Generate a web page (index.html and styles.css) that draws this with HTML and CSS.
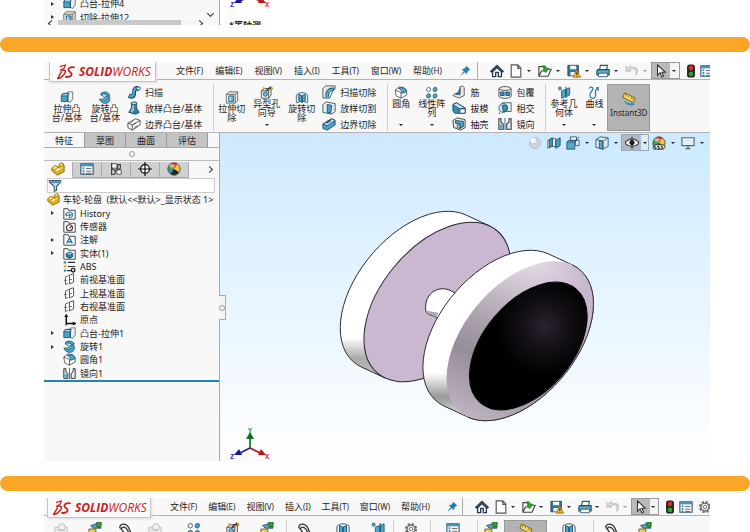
FILE: index.html
```html
<!DOCTYPE html>
<html lang="zh-CN">
<head>
<meta charset="utf-8">
<meta name="viewport" content="width=device-width, initial-scale=1">
<title>SOLIDWORKS</title>
<link rel="stylesheet" href="styles.css">
</head>
<body>
<svg class="defs" aria-hidden="true">
  <linearGradient id="rimShade" x1="0" y1="0" x2="0" y2="1">
    <stop offset="0" stop-color="#fff"/><stop offset=".76" stop-color="#fff"/><stop offset=".88" stop-color="#aaa"/><stop offset="1" stop-color="#c4c4c4"/>
  </linearGradient>
  <linearGradient id="rimFront" x1="0" y1="0" x2="0" y2="1">
    <stop offset="0" stop-color="#fff"/><stop offset=".72" stop-color="#fff"/><stop offset=".86" stop-color="#999"/><stop offset="1" stop-color="#eee"/>
  </linearGradient>
  <linearGradient id="chamfer" gradientUnits="userSpaceOnUse" x1="600" y1="180" x2="400" y2="640">
    <stop offset="0" stop-color="#eee7ef"/><stop offset=".12" stop-color="#d6ccd9"/><stop offset=".45" stop-color="#a9a0ac"/><stop offset=".65" stop-color="#958d98"/><stop offset="1" stop-color="#bdb2c1"/>
  </linearGradient>
  <linearGradient id="chamferRight" gradientUnits="userSpaceOnUse" x1="560" y1="420" x2="780" y2="420">
    <stop offset="0" stop-color="#c6b5cc" stop-opacity="0"/><stop offset="1" stop-color="#c6b5cc"/>
  </linearGradient>
  <radialGradient id="dome" gradientUnits="userSpaceOnUse" cx="78" cy="0" r="150">
    <stop offset="0" stop-color="#2b222e"/><stop offset=".45" stop-color="#141016"/><stop offset="1" stop-color="#000"/>
  </radialGradient>
  <symbol id="ds" viewBox="0 0 20 17"><g fill="none" stroke="#c9211e" stroke-linecap="round" stroke-linejoin="round"><path stroke-width="1.2" d="M4 2.5 9.5 1 8 4.5 4 7"/><path stroke-width="1.6" d="M5 6.5C10 6 10.500 8 8 11 6 13.500 3 15.500 1 15.500 2.500 13 4 10.500 5 8.500"/><path stroke-width="1.900" d="M18.500 3.500C15 3 12.500 4 12.500 6S16 9 16 11 13 14 10 13.800"/></g></symbol>
  <symbol id="pin" viewBox="0 0 16 16"><path fill="#2280b5" d="m9 1 6 6-2 .7-2.300 2.300-.7 3.500-3-3L1.500 15 1 14.500 5.500 9l-3-3L6 5.300 8.500 3z"/></symbol>
  <symbol id="home" viewBox="0 0 16 16"><path fill="#fff" stroke="#26384a" stroke-width="1.500" d="M3 7v7.500h3.500v-5h3v5H13V7"/><path fill="#9ec3d6" stroke="#26384a" stroke-width="1.500" d="M1 8.300 8 1.500l7 6.800-1.300 1L8 4 2.300 9.300z"/></symbol>
  <symbol id="new" viewBox="0 0 16 16"><path fill="#fff" stroke="#555" stroke-width="1.300" d="M2.500 1H10l3.500 3.500V15h-11zM10 1v4h3.500"/></symbol>
  <symbol id="open" viewBox="0 0 16 16"><path fill="#fff" stroke="#444" stroke-width="1.300" d="M1 3v11h10.500L15 6H8L6.500 3zM1 14l3-6h4"/><path fill="#3aa62d" stroke="#187a18" d="M4 3c3-2 5-1 6 2l2-.3-3 5-3.500-4 2-.2C7 4 6 3 4 3z"/></symbol>
  <symbol id="save" viewBox="0 0 16 16"><path fill="#3a7695" stroke="#21465c" d="M1 1.500h12v12H1z"/><path fill="#e7f4fa" d="M3.500 2h7v4h-7zM4 9h5v4H4z"/><path fill="#ffc52e" stroke="#ad6500" d="m11 7 4.500 8H7z"/><path stroke="#442900" stroke-width="1.300" d="M11.200 9.500v3m0 .8v1"/></symbol>
  <symbol id="print" viewBox="0 0 16 16"><path fill="#fff" stroke="#285b75" stroke-width="1.300" d="M4 7 5 1.500h8L12 7"/><path fill="#62a7c7" stroke="#244e65" stroke-width="1.300" d="M2 6.500h13v6H1V8z"/><path fill="#fff" stroke="#285b75" d="M3 10.500h10v4H3z"/></symbol>
  <symbol id="undo" viewBox="0 0 16 16"><path fill="none" stroke="#c5c9cc" stroke-width="1.500" d="M6 2 2 5l4 3V6c6-2 8 1 6 7 4-5 3-10-6-9zM1 2v6h5"/></symbol>
  <symbol id="cursor" viewBox="0 0 16 16"><path fill="#fff" stroke="#333" stroke-width="1.200" d="M4 1v12l3-3 2 5 2-1-2-4.500h4z"/></symbol>
  <symbol id="light" viewBox="0 0 16 16"><rect x="3.500" y=".5" width="9" height="15" rx="3" fill="#222"/><circle cx="8" cy="4.500" r="2.800" fill="#e52620"/><circle cx="8" cy="11.300" r="2.800" fill="#20a829"/></symbol>
  <symbol id="sheet" viewBox="0 0 16 16"><path fill="#fff" stroke="#34576a" stroke-width="1.300" d="M1 2h14v12H1z"/><path fill="#4893b8" d="M1 2h14v3H1z"/><path stroke="#3186b4" stroke-width="2" d="M3 7h2m-2 3h2m-2 3h2"/><path stroke="#555" d="M7 7.500h6m-6 3h6m-6 2.500h6"/></symbol>
  <symbol id="gear" viewBox="0 0 16 16"><circle cx="8" cy="8" r="5.500" fill="none" stroke="#777" stroke-width="3" stroke-dasharray="2.500 1.820"/><circle cx="8" cy="8" r="4.500" fill="#f5f5f5" stroke="#666" stroke-width="1.400"/><circle cx="8" cy="8" r="2" fill="none" stroke="#666"/></symbol>
  <symbol id="extrude" viewBox="0 0 16 16"><path fill="#eee" stroke="#56636b" d="m7 3 3-2h5v9l-3 4-5-2z"/><path fill="#4aa4cb" stroke="#1b4c66" d="m1 6 2-3h7l-1 3v7H1z"/><path fill="#a6daef" stroke="#1b4c66" d="M1 6h8l1-3H3z"/><path fill="none" stroke="#1b4c66" d="M9 6v7"/></symbol>
  <symbol id="revolve" viewBox="0 0 16 16"><path fill="#4aa4cb" stroke="#1b5875" d="M3 3c4-3 9-2 11 2l-5 2L3 5zM1 10c3 0 9-.5 12-4 2 4 1 8-3 9-4 .8-7-1-9-5z"/><path fill="#b1e0f1" stroke="#1b5875" d="M3 4c4-1 7 0 8 2L7 8zM2 11c4 1 8 0 11-3"/></symbol>
  <symbol id="sweep" viewBox="0 0 16 16"><path fill="none" stroke="#174a63" stroke-width="5" d="M2 12c6 3 6-1 6-4s2-6 6-3"/><path fill="none" stroke="#4aa4cb" stroke-width="3" d="M2.500 12.200c5 2 5-1 5-4s3-6 6-3.500"/><circle cx="13" cy="4" r="2" fill="#d7eef6" stroke="#174a63"/></symbol>
  <symbol id="loft" viewBox="0 0 16 16"><path fill="#397fa2" stroke="#1b4c66" d="M5 2h6v6l3 5-4 2-8-2 3-5z"/><path fill="#8fcbe4" d="M6 4h2v6l-2 3-2-1 2-4z"/><ellipse cx="8" cy="2.500" rx="3" ry="1.500" fill="#c9eaf5" stroke="#1b4c66"/></symbol>
  <symbol id="boundary" viewBox="0 0 16 16"><path fill="#fff" stroke="#444" d="m1 7 9-5 5 2v5l-9 6-5-3zM1 7l5 2 9-5M6 9v6"/><path fill="none" stroke="#666" d="m4 7 3-3m1 5 3-3m-3 6 4-2"/></symbol>
  <symbol id="cut" viewBox="0 0 16 16"><path fill="#eee" stroke="#555" d="m1 4 3-3h11v11l-3 3H1zM1 4h11v11m0-11 3-3"/><path fill="#60afd0" stroke="#1b5875" d="M4 6h6v7H4z"/><path fill="#b6dfef" d="M5 7h2v5H5z"/></symbol>
  <symbol id="hole" viewBox="0 0 16 16"><path fill="#eee" stroke="#444" d="m1 6 4-3h8v8l-3 4H1zM1 6h9v9m0-9 3-3"/><circle cx="6" cy="10" r="2.600" fill="#70b7d4" stroke="#1b5875"/><path stroke="#333" stroke-width="2" d="m7 6 6-5"/><path stroke="#e8951a" stroke-width="2" d="m10 4 2 1m1-4 2 3M3 2l2 1"/></symbol>
  <symbol id="revcut" viewBox="0 0 16 16"><path fill="#e9eef0" stroke="#33505e" d="M1 5c3-4 11-4 14 0v9h-3l-2-3H6l-2 3H1z"/><path fill="#54a8cb" stroke="#194c66" d="m4 4 4 2v8l-4-2zM12 4 8 6v8l4-2z"/></symbol>
  <symbol id="sweepcut" viewBox="0 0 16 16"><path fill="#e7e9ea" stroke="#44535b" d="m1 4 3-3h11v3l-3 3-3 8H1z"/><path fill="none" stroke="#1b5875" stroke-width="4" d="M6 14c-1-6 2-10 8-9"/><path fill="none" stroke="#5bb1d4" stroke-width="2" d="M6 14c-1-6 2-9 7-9"/></symbol>
  <symbol id="loftcut" viewBox="0 0 16 16"><path fill="#e9eef0" stroke="#33505e" d="m1 4 4-3 10 2v9l-4 3-10-2z"/><path fill="#4ba4ca" stroke="#194c66" d="m6 4 5 1-1 9-4-1z"/></symbol>
  <symbol id="boundcut" viewBox="0 0 16 16"><path fill="#4ba4ca" stroke="#194c66" d="m1 8 10-6 4 2v5l-9 6-5-2z"/><path fill="#bce5f3" stroke="#194c66" d="m1 8 10-6 4 2-9 6z"/><path stroke="#222" stroke-width="1.200" d="m5 7 5-3"/></symbol>
  <symbol id="fillet" viewBox="0 0 16 16"><path fill="#fff" stroke="#444" d="M1 5 6 1l5 1c3 1 4 3 4 5v4l-7 4-6-3zM1 5l7 3v7"/><path fill="#4ca8ce" stroke="#1b5875" d="M5 3 8 2c4 0 6 2 7 5L9 9c0-3-1-5-4-6z"/></symbol>
  <symbol id="pattern" viewBox="0 0 16 16"><g fill="#fff" stroke="#345260" stroke-width="1"><path d="m1.500 3 2-1.500 2.500 1v3l-2 1.500-2.500-1z"/><path fill="#4ca8ce" d="m9.500 3 2-1.500 2.500 1v3l-2 1.500-2.500-1zM1.500 11l2-1.500 2.500 1v3L4 15l-2.500-1zM9.500 11l2-1.500 2.500 1v3L12 15l-2.500-1z"/></g></symbol>
  <symbol id="rib" viewBox="0 0 16 16"><path fill="#e5e8e9" stroke="#555" d="m9 2 3-1 2 2v9l-6 3-7-3 2-2 6 1z"/><path fill="#3b91b9" stroke="#194c66" d="m9 4v7l-5-1c3-1 4-3 5-6z"/></symbol>
  <symbol id="draft" viewBox="0 0 16 16"><path fill="#378db5" stroke="#194c66" d="m1 4 4-2 10 6v6H3l-2-3z"/><path fill="#c7e8f3" stroke="#194c66" d="m1 4 4-2 10 6-6 1z"/><path fill="#fff" stroke="#345" d="M9 9h6v5H9z"/></symbol>
  <symbol id="shell" viewBox="0 0 16 16"><path fill="#e6edf0" stroke="#333" d="m1 4 5-3 9 2v9l-5 3-8-3z"/><path fill="#4aa4cb" stroke="#194c66" d="m4 4 9 1v6l-4 2V8L4 7z"/><path fill="#fff" stroke="#333" d="M6 9h3v4l-3-1z"/></symbol>
  <symbol id="wrap" viewBox="0 0 16 16"><path fill="#eee" stroke="#444" d="M1 4v9c3 3 11 3 14 0V4c-3-3-11-3-14 0 3 3 11 3 14 0"/><path fill="#3997c1" stroke="#194c66" d="M3 8h4v4H3zm6 0h4v4H9z"/></symbol>
  <symbol id="intersect" viewBox="0 0 16 16"><path fill="#eee" stroke="#456" d="M5 2h10v10H5z"/><circle cx="6" cy="8" r="5" fill="#d1e8f1" stroke="#255b75"/><path fill="#3894bd" stroke="#194c66" d="M5 5h5c2 4 0 7-4 7zM2 13l-1 2"/></symbol>
  <symbol id="mirror" viewBox="0 0 16 16"><g fill="#e6eef2" stroke="#333" stroke-width="1.200"><path d="M1 2v12h5V8L3.500 6V2zM15 2v12h-5V8l2.500-2V2z"/><path stroke="#2a84ae" d="M8 1v14"/></g><path fill="#4aa4cb" d="m2 8 3 1v4H2z"/></symbol>
  <symbol id="ref" viewBox="0 0 16 16"><circle cx="3" cy="3" r="1.800" fill="#58add0" stroke="#235c76"/><path fill="#4da7cb" stroke="#235c76" d="m5 6 5-2v9l-5 2zm6-2 4-2v9l-4 2z"/><path stroke="#235c76" stroke-width="1.300" d="M10.500 1v14"/></symbol>
  <symbol id="curve" viewBox="0 0 16 16"><path fill="none" stroke="#267da5" stroke-width="1.500" d="M2 3c3-3 6-1 4 2s-5 6-2 9 6 0 6-3-1-5 1-7 3 0 2 2M11 2l3 0"/></symbol>
  <symbol id="ruler" viewBox="0 0 16 16"><path fill="#ffdf62" stroke="#75570d" d="m3 1 12 6-2 5L1 6z"/><path stroke="#75570d" d="m5 2-1 3m4-1-1 2m4 0-1 2m3-1-1 2"/><path fill="#3a91bc" d="M2 9c3 3 6 4 9 4l-1-2 5 3-5 2v-1C6 15 3 13 2 9z"/></symbol>
  <symbol id="part" viewBox="0 0 16 16"><path fill="#e8b11f" stroke="#895d00" d="m1 7 4-3 4 2 1-4 3-1 2 3v7l-8 4-6-5z"/><path fill="#ffe680" stroke="#a87808" stroke-width=".7" d="m1 7 4-3 3 2-4 3zm8-5 3-1 2 3-2 1zM4 9l4-3c3 2 4 0 4-1l2-1v3l-7 5z"/></symbol>
  <symbol id="config" viewBox="0 0 16 16"><path fill="#fff" stroke="#444" d="M3 2h6v5H3zM9 9h5v5H9z"/><path fill="none" stroke="#333" stroke-width="1.200" d="M3 1v14M3 7l4 3v4M7 10l3-3V3h3v4l-3 2M3 14h4"/></symbol>
  <symbol id="target" viewBox="0 0 16 16"><circle cx="8" cy="8" r="5" fill="#fff" stroke="#111" stroke-width="1.400"/><path stroke="#111" stroke-width="1.400" d="M8 0v16M0 8h16"/></symbol>
  <symbol id="ball" viewBox="0 0 16 16"><circle cx="8" cy="8" r="7" fill="#2f95c6"/><path fill="#dd3e2d" d="M8 8 3 3a7 7 0 0 1 9-1z"/><path fill="#f3c72e" d="m8 8 4-6a7 7 0 0 1 2 10z"/><path fill="#252525" d="m8 8 6 4a7 7 0 0 1-10 2z"/><path fill="#47a63b" d="M8 8 1 10a7 7 0 0 1 2-7z"/><circle cx="8" cy="8" r="7" fill="none" stroke="#555"/><ellipse cx="6" cy="4.500" rx="3" ry="2" fill="#fff" opacity=".55"/></symbol>
  <symbol id="filter" viewBox="0 0 16 16"><path fill="#b5dced" stroke="#3a5666" stroke-width="1.300" d="M1 2h14v2l-5 5v5l-3 1V9L1 4z"/><path stroke="#347da0" stroke-width="1.500" d="M3 4h10"/></symbol>
  <symbol id="folder" viewBox="0 0 16 16"><path fill="#fff" stroke="#444" stroke-width="1.200" d="M1 2h5l1 2h8v11H1z"/></symbol>
  <symbol id="history" viewBox="0 0 16 16"><use href="#folder"/><path fill="none" stroke="#267da5" stroke-width="1.300" d="M4 10a4 3.500 0 1 1 3 3M3 8l1 3 3-1m1-2v3l3-2"/></symbol>
  <symbol id="sensor" viewBox="0 0 16 16"><use href="#folder"/><circle cx="8" cy="9.500" r="3.700" fill="#fff" stroke="#333" stroke-width="1.300"/><path stroke="#d33" stroke-width="1.800" d="m8 10 3-3"/></symbol>
  <symbol id="note" viewBox="0 0 16 16"><use href="#folder"/><path fill="none" stroke="#1d6f9d" stroke-width="1.600" d="m4.500 13 3.500-7 3.500 7M6 11h4"/></symbol>
  <symbol id="solid" viewBox="0 0 16 16"><use href="#folder"/><path fill="#277fa8" stroke="#124a66" d="m4 8 4-2 4 2v4l-4 2-4-2z"/><path fill="#a8d9eb" d="m5 8 3-1 3 1-3 1.500z"/></symbol>
  <symbol id="abs" viewBox="0 0 16 16"><path stroke="#333" stroke-width="1.400" d="M6 3h9M6 8h9M5 13h5"/><circle cx="2.500" cy="3" r="1.700" fill="#3b98c0"/><circle cx="2.500" cy="8" r="1.700" fill="#ddb82a"/><circle cx="2.500" cy="13" r="1.700" fill="#3b98c0"/><circle cx="12.500" cy="12.500" r="2.200" fill="#fff" stroke="#222" stroke-width="1.700"/></symbol>
  <symbol id="plane" viewBox="0 0 16 16"><path fill="#fff" stroke="#555" stroke-width="1.200" d="M7 3 3 5v9l3-1M8 2.500l5-1.500v10l-5 2.500z"/><path stroke="#555" d="M1 9h4m3-1h3"/></symbol>
  <symbol id="origin" viewBox="0 0 16 16"><path fill="none" stroke="#111" stroke-width="1.900" d="M4 15V3M4 13h12"/><path fill="#111" d="M1.500 5 4 1l2.500 4zM12 10.500l4 2.500-4 2.500z"/></symbol>
  <symbol id="sphere" viewBox="0 0 16 16"><circle cx="8" cy="8" r="6.500" fill="#c6d4df" stroke="#b0bfcb"/><circle cx="6" cy="5" r="3" fill="#f3f8fb"/></symbol>
  <symbol id="section" viewBox="0 0 16 16"><path fill="#eee" stroke="#3e535f" d="m1 5 4-2v9l-4 2zM6 3h4v9H6z"/><path fill="#4aa4cb" stroke="#194c66" d="m10 5 5-3v9l-5 3zM3 4l3-2v9l-3 2z"/></symbol>
  <symbol id="cube" viewBox="0 0 16 16"><path fill="#d9ebf2" stroke="#315669" d="m1 4 5-3 9 1v10l-6 3-8-2z"/><path fill="#59a9ca" stroke="#315669" d="m5 5 4 1v9l-4-1z"/><path fill="none" stroke="#315669" d="m1 4 8 2 6-4M9 6v9"/></symbol>
  <symbol id="views" viewBox="0 0 16 16"><path fill="#eef5f8" stroke="#35515f" d="M5 1h7v4H5zM11 5h4v6h-4z"/><path fill="#57a8ca" stroke="#245a74" d="m1 7 2-2h9l-2 2v8H1z"/><path fill="none" stroke="#245a74" d="M1 7h9l5-6"/></symbol>
  <symbol id="eye" viewBox="0 0 16 16"><path fill="#fff" stroke="#222" stroke-width="1.200" d="M0 8c4-6 12-6 16 0-4 5-12 5-16 0z"/><circle cx="8" cy="7.500" r="3" fill="#222"/><path stroke="#111" d="M8 1v14"/></symbol>
  <symbol id="scene" viewBox="0 0 16 16"><use href="#ball"/><path fill="#eee" stroke="#333" d="m1 13 2-3h10l2 3-2 2H2z"/><path stroke="#333" stroke-width="1.500" stroke-dasharray="2" d="M2 12h12M3 14h11"/></symbol>
  <symbol id="monitor" viewBox="0 0 16 16"><path fill="#e0eef5" stroke="#536a77" stroke-width="1.300" d="M1 2h14v9H1z"/><path stroke="#536a77" stroke-width="1.500" d="M8 11v3m-3 .5h6"/></symbol>
  <symbol id="comp" viewBox="0 0 16 16"><path fill="#f2cd42" stroke="#715d14" d="M1 8h8v7H1z"/><path fill="#58a8c9" stroke="#214c61" d="m3 4 8-2 4 5H6z"/><path fill="#3a9c3a" stroke="#1c661c" d="m9 1 6-1v5l-4 1z"/></symbol>
  <symbol id="clip" viewBox="0 0 16 16"><path fill="none" stroke="#333" stroke-width="1.500" d="M2 7c0-6 7-6 10-1l3 7M4 8c0-3 4-3 6 0l3 5M3 7l5 7"/></symbol>
  <symbol id="ghost" viewBox="0 0 16 16"><g fill="#eee" stroke="#bbb"><path d="M1 6h14v9H1z"/><circle cx="9" cy="6" r="4"/><path d="M3 9h9"/></g></symbol>
  <symbol id="triad" viewBox="0 0 42 36"><path stroke="#237b25" stroke-width="1.800" d="M20 21V9"/><path fill="#176e1b" d="m16 12 4-7 4 7z"/><path stroke="#1b1ba6" stroke-width="1.800" d="m20 21-10 5"/><path fill="#1515a4" d="m4 28 5-6 3 6z"/><path stroke="#b41c1c" stroke-width="1.800" d="m20 21 10 5"/><path fill="#b61818" d="m36 28-8 0 3-6z"/></symbol>
</svg>

<section class="shot peek-top">
  <aside class="panel">
    <ul class="tree short">
      <li class="open"><svg><use href="#extrude"/></svg>凸台-拉伸4</li>
      <li class="open"><svg><use href="#cut"/></svg>切除-拉伸12</li>
    </ul>
    <span class="chev down"></span>
    <div class="scroll"><span class="chev left"></span><span class="thumb"></span><span class="chev right"></span></div>
  </aside>
  <div class="canvas plain">
    <svg class="axes" viewBox="0 0 42 36"><use href="#triad"/><text x="0" y="32" class="tz">Z</text><text x="35" y="32" class="tx">X</text></svg>
    <span class="view-name">*等轴测</span>
  </div>
</section>

<div class="bar" role="separator"></div>

<main class="shot app">
  <header class="menubar">
    <div class="logo"><svg><use href="#ds"/></svg><span><b>SOLID</b>WORKS</span></div>
    <nav class="menus">
      <button>文件<small>(F)</small></button><button>编辑<small>(E)</small></button><button>视图<small>(V)</small></button><button>插入<small>(I)</small></button><button>工具<small>(T)</small></button><button>窗口<small>(W)</small></button><button>帮助<small>(H)</small></button>
    </nav>
    <button class="pin" aria-label="固定"><svg><use href="#pin"/></svg></button>
    <div class="quick">
      <button aria-label="主页"><svg><use href="#home"/></svg></button>
      <button class="drop" aria-label="新建"><svg><use href="#new"/></svg></button>
      <button class="drop" aria-label="打开"><svg><use href="#open"/></svg></button>
      <button class="drop" aria-label="保存"><svg><use href="#save"/></svg></button>
      <button class="drop" aria-label="打印"><svg><use href="#print"/></svg></button>
      <button class="drop dim" aria-label="撤销"><svg><use href="#undo"/></svg></button>
      <button class="drop picked" aria-label="选择"><svg><use href="#cursor"/></svg></button>
      <button class="near" aria-label="重建"><svg><use href="#light"/></svg></button>
      <button aria-label="属性"><svg><use href="#sheet"/></svg></button>
    </div>
  </header>

  <div class="ribbon">
    <button class="tool wide low"><svg><use href="#extrude"/></svg>拉伸凸<br>台/基体</button>
    <button class="tool wide low"><svg><use href="#revolve"/></svg>旋转凸<br>台/基体</button>
    <div class="stack">
      <button><svg><use href="#sweep"/></svg>扫描</button>
      <button><svg><use href="#loft"/></svg>放样凸台/基体</button>
      <button><svg><use href="#boundary"/></svg>边界凸台/基体</button>
    </div>
    <i class="rule"></i>
    <button class="tool low"><svg><use href="#cut"/></svg>拉伸切<br>除</button>
    <button class="tool more"><svg><use href="#hole"/></svg>异型孔<br>向导</button>
    <button class="tool low"><svg><use href="#revcut"/></svg>旋转切<br>除</button>
    <div class="stack">
      <button><svg><use href="#sweepcut"/></svg>扫描切除</button>
      <button><svg><use href="#loftcut"/></svg>放样切割</button>
      <button><svg><use href="#boundcut"/></svg>边界切除</button>
    </div>
    <i class="rule"></i>
    <button class="tool slim more"><svg><use href="#fillet"/></svg>圆角</button>
    <button class="tool more"><svg><use href="#pattern"/></svg>线性阵<br>列</button>
    <div class="stack">
      <button><svg><use href="#rib"/></svg>筋</button>
      <button><svg><use href="#draft"/></svg>拔模</button>
      <button><svg><use href="#shell"/></svg>抽壳</button>
    </div>
    <div class="stack">
      <button><svg><use href="#wrap"/></svg>包覆</button>
      <button><svg><use href="#intersect"/></svg>相交</button>
      <button><svg><use href="#mirror"/></svg>镜向</button>
    </div>
    <i class="rule"></i>
    <button class="tool more"><svg><use href="#ref"/></svg>参考几<br>何体</button>
    <button class="tool slim more"><svg><use href="#curve"/></svg>曲线</button>
    <button class="instant"><svg><use href="#ruler"/></svg>Instant3D</button>
  </div>

  <div class="work">
    <aside class="panel">
      <div class="tabs"><button class="on">特征</button><button>草图</button><button>曲面</button><button>评估</button></div>
      <div class="grip"></div>
      <div class="icon-tabs">
        <button class="on" aria-label="设计树"><svg><use href="#part"/></svg></button>
        <button aria-label="属性"><svg><use href="#sheet"/></svg></button>
        <button aria-label="配置"><svg><use href="#config"/></svg></button>
        <button aria-label="尺寸"><svg><use href="#target"/></svg></button>
        <button aria-label="外观"><svg><use href="#ball"/></svg></button>
        <span class="chev right"></span>
      </div>
      <label class="filter"><svg><use href="#filter"/></svg><input type="text" aria-label="过滤"></label>
      <ul class="tree">
        <li class="root"><svg><use href="#part"/></svg>车轮-轮盘&nbsp; (默认&lt;&lt;默认&gt;_显示状态 1&gt;</li>
        <li class="open"><svg><use href="#history"/></svg>History</li>
        <li><svg><use href="#sensor"/></svg>传感器</li>
        <li class="open"><svg><use href="#note"/></svg>注解</li>
        <li class="open"><svg><use href="#solid"/></svg>实体(1)</li>
        <li><svg><use href="#abs"/></svg>ABS</li>
        <li><svg><use href="#plane"/></svg>前视基准面</li>
        <li><svg><use href="#plane"/></svg>上视基准面</li>
        <li><svg><use href="#plane"/></svg>右视基准面</li>
        <li><svg><use href="#origin"/></svg>原点</li>
        <li class="open"><svg><use href="#extrude"/></svg>凸台-拉伸1</li>
        <li class="open"><svg><use href="#revolve"/></svg>旋转1</li>
        <li><svg><use href="#fillet"/></svg>圆角1</li>
        <li><svg><use href="#mirror"/></svg>镜向1</li>
      </ul>
    </aside>
    <div class="canvas">
      <button class="handle" aria-label="折叠"></button>
      <div class="view-tools">
        <button aria-label="缩放"><svg><use href="#sphere"/></svg></button>
        <button aria-label="剖面"><svg><use href="#section"/></svg></button>
        <button class="drop" aria-label="视图定向"><svg><use href="#views"/></svg></button>
        <button class="drop" aria-label="显示样式"><svg><use href="#cube"/></svg></button>
        <button class="drop picked" aria-label="隐藏"><svg><use href="#eye"/></svg></button>
        <button class="drop" aria-label="布景"><svg><use href="#scene"/></svg></button>
        <button class="drop" aria-label="视图设定"><svg><use href="#monitor"/></svg></button>
      </div>
      <svg class="model" viewBox="0 0 490 328" role="img" aria-label="车轮">
        <g transform="translate(110 67) scale(.33333)" stroke-width="3">
          <path fill="url(#rimShade)" stroke="#2b2b2b" d="M479 78 408 45A279 167-50 0 0 94 501L165 534Z"/>
          <ellipse transform="translate(322 306) rotate(-50)" rx="279" ry="167" fill="#c9b8d0" stroke="#2b2430"/>
          <path fill="#fff" stroke="#2b2b2b" d="M390 290C360 265 335 259 309 275 289 290 284 315 288 335 292 344 300 343 322 353L380 370Z"/>
          <path fill="#aaa" d="M290 332C294 343 302 341 319 350L325 338Z"/>
          <path fill="url(#rimFront)" stroke="#2b2b2b" d="M727 195 656 162A279 167-50 0 0 342 618L413 651A279 167-50 0 0 727 195Z"/>
          <path fill="url(#chamfer)" d="M727 195A279 167-50 0 0 413 651 279 167-50 0 0 727 195Z"/>
          <path fill="url(#chamferRight)" d="M727 195A279 167-50 0 0 413 651 279 167-50 0 0 727 195Z"/>
          <path fill="none" stroke="#39313d" d="M727 195A279 167-50 0 1 413 651"/>
          <ellipse transform="translate(595 438) rotate(-50)" rx="223" ry="134" fill="url(#dome)" stroke="#000"/>
        </g>
      </svg>
      <svg class="axes" viewBox="0 0 42 36"><use href="#triad"/><text x="18" y="6" class="ty">Y</text><text x="0" y="32" class="tz">Z</text><text x="35" y="32" class="tx">X</text></svg>
    </div>
  </div>
</main>

<div class="bar" role="separator"></div>

<section class="shot peek-bottom">
  <header class="menubar">
    <div class="logo"><svg><use href="#ds"/></svg><span><b>SOLID</b>WORKS</span></div>
    <nav class="menus">
      <button>文件<small>(F)</small></button><button>编辑<small>(E)</small></button><button>视图<small>(V)</small></button><button>插入<small>(I)</small></button><button>工具<small>(T)</small></button><button>窗口<small>(W)</small></button><button>帮助<small>(H)</small></button>
    </nav>
    <button class="pin" aria-label="固定"><svg><use href="#pin"/></svg></button>
    <div class="quick">
      <button aria-label="主页"><svg><use href="#home"/></svg></button>
      <button class="drop" aria-label="新建"><svg><use href="#new"/></svg></button>
      <button class="drop" aria-label="打开"><svg><use href="#open"/></svg></button>
      <button class="drop" aria-label="保存"><svg><use href="#save"/></svg></button>
      <button class="drop" aria-label="打印"><svg><use href="#print"/></svg></button>
      <button class="drop dim" aria-label="撤销"><svg><use href="#undo"/></svg></button>
      <button class="drop picked" aria-label="选择"><svg><use href="#cursor"/></svg></button>
      <button class="near" aria-label="重建"><svg><use href="#light"/></svg></button>
      <button aria-label="属性"><svg><use href="#sheet"/></svg></button>
      <button aria-label="选项"><svg><use href="#gear"/></svg></button>
    </div>
  </header>
  <div class="ribbon">
    <button class="cell"><svg><use href="#ghost"/></svg></button>
    <button class="cell"><svg><use href="#comp"/></svg></button>
    <button class="cell tight"><svg><use href="#clip"/></svg></button>
    <button class="cell"><svg><use href="#ghost"/></svg></button>
    <button class="cell roomy"><svg><use href="#pattern"/></svg></button>
    <button class="cell"><svg><use href="#hole"/></svg></button>
    <button class="cell"><svg><use href="#comp"/></svg></button>
    <i class="rule"></i>
    <button class="cell"><svg><use href="#clip"/></svg></button>
    <button class="cell roomy"><svg><use href="#revcut"/></svg></button>
    <button class="cell tight"><svg><use href="#ref"/></svg></button>
    <i class="rule"></i>
    <button class="cell"><svg><use href="#gear"/></svg></button>
    <i class="rule"></i>
    <button class="cell roomy"><svg><use href="#sheet"/></svg></button>
    <i class="rule"></i>
    <button class="cell tight"><svg><use href="#comp"/></svg></button>
    <button class="instant"><svg><use href="#ruler"/></svg></button>
    <button class="cell roomy"><svg><use href="#revcut"/></svg></button>
    <i class="rule"></i>
    <button class="cell"><svg><use href="#clip"/></svg></button>
    <button class="cell"><svg><use href="#comp"/></svg></button>
  </div>
</section>
</body>
</html>
```
FILE: styles.css
```css
* { box-sizing: border-box; }

body {
  margin: 0;
  background: #fff;
  color: #222;
  font: 9px/13px "Noto Sans", "Noto Sans CJK SC", sans-serif;
  overflow: hidden;
}

.defs { position: absolute; width: 0; height: 0; }

button {
  display: flex;
  flex: none;
  align-items: center;
  margin: 0;
  padding: 0;
  border: 0;
  background: none;
  color: inherit;
  font: inherit;
  white-space: nowrap;
}

button svg { flex: none; width: 14px; height: 14px; }

.shot { margin: 0 40px 0 44px; overflow: hidden; }
.bar { height: 15px; border-radius: 8px; background: #fca627; }

/* Menu bar */
.menubar {
  display: flex;
  height: 18px;
  border-bottom: 1px solid #b4b4b4;
  background: #f8f8f8;
}

.logo {
  position: relative;
  display: flex;
  flex: none;
  align-items: center;
  gap: 3px;
  width: 107px;
  height: 20px;
  margin-left: 5px;
  padding-left: 6px;
  border: 1px solid #c4c4c4;
  border-top: 0;
  background: #fafafa;
  box-shadow: 1px 1px 2px #ddd;
  color: #c9211e;
  font: italic 12px/16px "Open Sans", sans-serif;
}

.logo svg { flex: none; width: 20px; height: 16px; }
.menus { display: flex; gap: 12px; margin-left: 20px; }
.menus small { font-size: 8px; }
.pin { margin-left: 18px; }
.pin svg { width: 11px; height: 11px; }

.quick {
  display: flex;
  flex: none;
  align-items: center;
  margin-left: 6px;
  padding-left: 12px;
  border-left: 1px solid #aaa;
}

.quick > button { width: 19px; height: 17px; }
.quick > .drop { width: 29px; }
.quick > .near { width: 16px; }
.quick > .dim { width: 26px; }

.drop { justify-content: space-between; padding-right: 7px; }

.drop::after, .more::after {
  content: "";
  border: 2px solid transparent;
  border-top-color: #222;
  border-bottom: 0;
}

.dim { padding-right: 4px; }
.dim::after { border-top-color: #999; }

.quick > .picked {
  margin-right: 4px;
  padding: 0 3px 0 2px;
  border: 1px solid #999;
  background: linear-gradient(90deg, #b9b9b9 18px, #f4f4f4 18px);
}

/* Command ribbon */
.ribbon {
  display: flex;
  height: 53px;
  padding: 4px 0 0 4px;
  border-bottom: 1px solid #b4b4b4;
  background: #f8f8f8;
}

.tool {
  position: relative;
  flex-direction: column;
  width: 35px;
  padding-top: 2px;
  line-height: 9px;
  text-align: center;
}

.tool.wide { width: 38px; }
.tool.slim { width: 26px; }
.tool.low { padding-top: 7px; }
.tool svg { height: 13px; }
.more::after { position: absolute; bottom: 6px; }

.stack { display: flex; flex: none; flex-direction: column; margin: 0 7px 0 3px; }
.stack button { gap: 4px; height: 16px; }
.rule { flex: none; width: 1px; height: 47px; margin-left: 4px; background: #ccc; }

.instant {
  flex-direction: column;
  gap: 2px;
  width: 43px;
  height: 47px;
  padding-top: 7px;
  border: 1px solid #999;
  background: #b3b3b3;
  font-size: 8px;
  line-height: 10px;
}

/* Feature tree */
.work { display: flex; }

.panel {
  flex: 0 0 176px;
  border-right: 1px solid #a8a8a8;
  background: #f8f8f8;
}

.tabs { display: flex; height: 15px; border-bottom: 1px solid #aaa; }

.tabs button {
  justify-content: center;
  width: 41px;
  border-right: 1px solid #999;
  background: #c3c3c3;
}

.tabs .on, .icon-tabs .on { background: #f8f8f8; }

.grip {
  display: grid;
  place-items: center;
  height: 13px;
  border-bottom: 1px solid #bbb;
}

.grip::after, .handle::after {
  content: "";
  flex: none;
  width: 4px;
  height: 4px;
  border: 1px solid #999;
  border-radius: 50%;
}

.icon-tabs { display: flex; align-items: center; height: 17px; }

.icon-tabs button {
  justify-content: center;
  width: 29px;
  height: 16px;
  border-right: 1px solid #aaa;
  border-bottom: 1px solid #aaa;
  background: #d0d0d0;
}

.icon-tabs .on { border-bottom-color: #f8f8f8; }
.icon-tabs .chev { margin-left: 18px; }

.chev {
  width: 5px;
  height: 5px;
  border: solid #333;
  border-width: 1px 1px 0 0;
  transform: rotate(45deg);
}

.chev.left { transform: rotate(-135deg); }
.chev.down { transform: rotate(135deg); }

.filter {
  display: flex;
  height: 15px;
  margin: 0 4px 0 3px;
  border: 1px solid #ccc;
  background: #fff;
}

.filter svg { width: 14px; height: 13px; }
.filter input { flex: 1; min-width: 0; border: 0; background: none; font: inherit; outline: 0; }

.tree {
  display: grid;
  grid-auto-rows: 1fr;
  height: 189px;
  margin: 0;
  padding: 0;
  border-bottom: 2px solid #2380b3;
  list-style: none;
}

.tree li {
  position: relative;
  display: flex;
  align-items: center;
  gap: 4px;
  padding-left: 19px;
  white-space: nowrap;
}

.tree svg { flex: none; width: 13px; height: 13px; }
.tree .root { gap: 3px; padding-left: 3px; }

.open::before {
  content: "";
  position: absolute;
  left: 7px;
  border: 2px solid transparent;
  border-left: 3px solid #333;
  border-right: 0;
}

/* Graphics area */
.canvas {
  position: relative;
  flex: 1;
  height: 328px;
  background: linear-gradient(#cde9ff, #e4f4ff 45%, #fbfdff 92%);
}

.model { display: block; width: 100%; height: 100%; }

.view-tools {
  position: absolute;
  top: 1px;
  right: 0;
  display: flex;
  align-items: center;
}

.view-tools button { width: 19px; height: 17px; }
.view-tools .drop { width: 29px; padding-right: 6px; }
.view-tools .picked {
  width: 28px;
  margin: 0 3px 0 -3px;
  padding: 0 1px 0 3px;
  border: 1px solid #9aa9b4;
  background: linear-gradient(90deg, #aebbc4 19px, #d8ecf9 19px);
}

.handle {
  position: absolute;
  top: 162px;
  left: -1px;
  justify-content: center;
  width: 7px;
  height: 25px;
  border: 1px solid #aaa;
  border-left: 0;
  background: #f4f4f4;
}

.axes { position: absolute; left: 10px; bottom: -2px; width: 42px; height: 36px; }
.axes text { font: bold 7px "Liberation Mono", monospace; }
.ty { fill: #2b912b; }
.tz { fill: #2a2ae0; }
.tx { fill: #e02a2a; }

/* Neighbouring windows, partly visible */
.peek-top { display: flex; height: 25px; margin-bottom: 12px; }
.peek-top .panel { position: relative; }
.tree.short { height: 27px; margin-top: -3px; border: 0; }
.panel > .down { position: absolute; top: 11px; right: 6px; }

.scroll {
  position: absolute;
  top: 20px;
  left: 5px;
  right: 14px;
  display: flex;
  align-items: center;
  gap: 4px;
  height: 7px;
  background: #f4f4f4;
}

.thumb { flex: 0 0 123px; height: 7px; background: #c9c9c9; }
.scroll .right { margin-left: 12px; }
.plain { height: 25px; background: #fff; overflow: hidden; }
.plain .axes { bottom: 14px; }
.view-name { position: absolute; top: 19px; left: 9px; font-weight: bold; }

.app { margin-top: 10px; margin-bottom: 15px; }

.peek-bottom { height: 34px; margin-top: 7px; }
.peek-bottom .logo { width: 104px; margin-left: 3px; padding-left: 4px; }
.peek-bottom .menus { gap: 11px; margin-left: 19px; }
.peek-bottom .pin { margin-left: 17px; }
.peek-bottom .quick { margin-left: 4px; }
.peek-bottom .quick > .drop { width: 28px; }
.peek-bottom .quick > .dim { width: 25px; }
.peek-bottom .ribbon { padding-left: 0; }
.peek-bottom .rule { margin-left: 2px; }
.cell { justify-content: center; width: 34px; height: 18px; }
.cell.tight { width: 26px; }
.cell.roomy { width: 44px; }
.peek-bottom .instant { padding-top: 2px; }
```
